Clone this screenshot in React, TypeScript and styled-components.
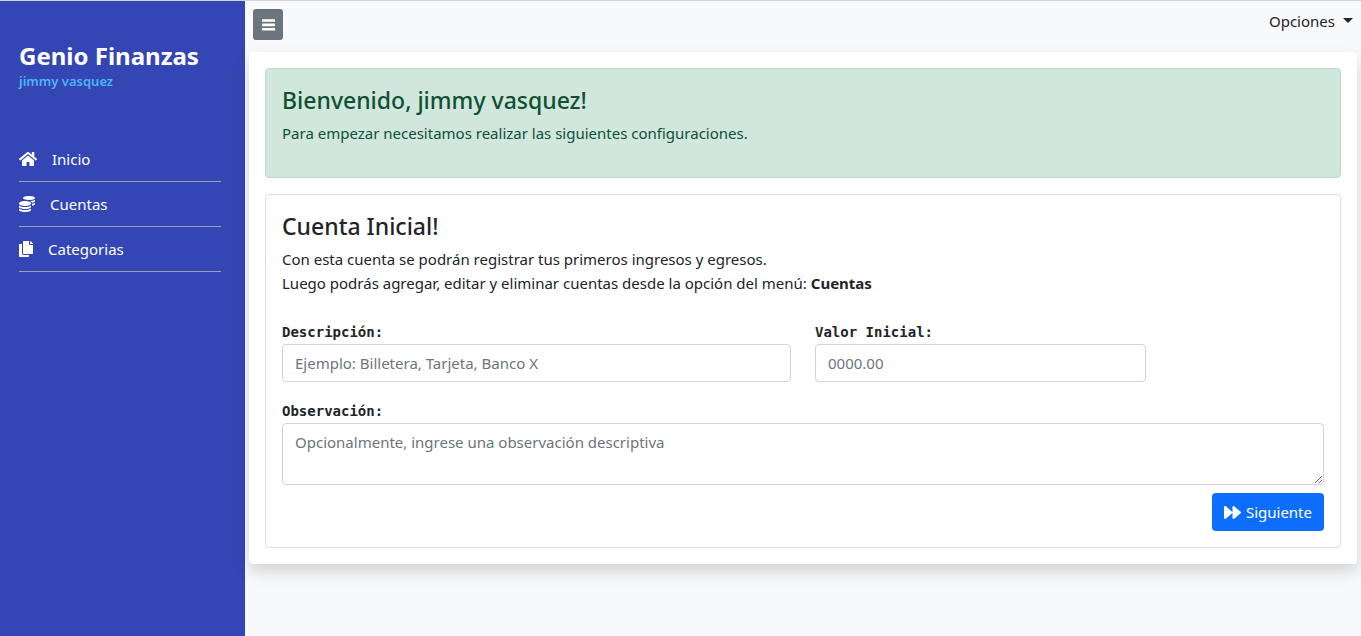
import React from "react";
import styled, { createGlobalStyle } from "styled-components";
import { FaCoins, FaCopy, FaForward, FaHome } from "react-icons/fa";

const GlobalStyle = createGlobalStyle`
  *, *::before, *::after { box-sizing: border-box; }
  body {
    margin: 0;
    background: #f8f9fa;
    color: #212529;
    font-family: "Noto Sans", "Open Sans", sans-serif;
    font-size: 15px;
    line-height: 24px;
  }
`;

const Page = styled.div`
  display: flex;
  min-height: 100vh;
  border-top: 1px solid #cfd2d8;
`;

const Sidebar = styled.aside`
  flex: none;
  width: 245px;
  padding: 40px 24px 24px 19px;
  background: #3446b4;
  color: #fff;
`;

const Brand = styled.h1`
  margin: 0;
  font-size: 24px;
  line-height: 30px;
  font-weight: 700;
`;

const UserName = styled.p`
  margin: 0 0 46px;
  color: #4cb4f5;
  font-size: 13px;
  line-height: 20px;
  font-weight: 600;
`;

const MenuLink = styled.a<{ $icon: number }>`
  display: flex;
  align-items: center;
  gap: 15px;
  height: 45px;
  border-bottom: 1px solid #9a9fb4;
  color: #fff;
  text-decoration: none;
  svg { width: ${(p) => p.$icon}px; height: 16px; }
`;

const Main = styled.div`
  flex: 1;
  min-width: 0;
  padding: 0 4px;
`;

const TopBar = styled.header`
  display: flex;
  align-items: flex-start;
  justify-content: space-between;
  height: 51px;
  padding: 8px 4px;
`;

const ToggleButton = styled.button`
  display: grid;
  place-items: center;
  width: 30px;
  height: 31px;
  padding: 0;
  border: 0;
  border-radius: 3px;
  background: #6c757d;
  color: #fff;
`;

const OptionsButton = styled.button`
  display: flex;
  align-items: center;
  gap: 8px;
  padding: 0;
  border: 0;
  background: none;
  color: #212529;
  font: inherit;
  &::after {
    content: "";
    border-top: 5px solid;
    border-left: 5px solid transparent;
    border-right: 5px solid transparent;
    margin-bottom: 1px;
  }
`;

const Content = styled.main`
  padding: 16px;
  border-radius: 4px;
  background: #fff;
  box-shadow: 0 8px 16px rgba(0, 0, 0, 0.15);
`;

const Panel = styled.section<{ $success?: boolean }>`
  padding: 16px;
  border: 1px solid ${(p) => (p.$success ? "#badbcc" : "#dfdfdf")};
  border-radius: 4px;
  background: ${(p) => (p.$success ? "#d1e7dd" : "#fff")};
  color: ${(p) => (p.$success ? "#0f5132" : "inherit")};
  & + & { margin-top: 16px; }
`;

const Title = styled.h2`
  margin: 0 0 6px;
  font-size: 23px;
  line-height: 30px;
  font-weight: 500;
`;

const Text = styled.p`
  margin: 0 0 16px;
`;

const Form = styled.form`
  display: grid;
  grid-template-columns: repeat(12, minmax(0, 1fr));
  column-gap: 24px;
  row-gap: 17px;
  padding-top: 9px;
`;

const Field = styled.div<{ $span: number }>`
  grid-column: span ${(p) => p.$span};
`;

const Label = styled.label`
  display: block;
  font-family: "DejaVu Sans Mono", monospace;
  font-size: 14px;
  font-weight: 700;
`;

const Input = styled.input`
  display: block;
  width: 100%;
  height: 38px;
  padding: 6px 12px;
  border: 1px solid #ced4da;
  border-radius: 4px;
  background: #fff;
  color: #212529;
  font: inherit;
  &::placeholder { color: #6c757d; opacity: 1; }
`;

const TextArea = styled(Input)`
  height: 62px;
  resize: vertical;
`;

const Actions = styled.div`
  display: flex;
  justify-content: flex-end;
  padding-top: 8px;
`;

const NextButton = styled.button`
  display: flex;
  align-items: center;
  gap: 5px;
  height: 38px;
  padding: 0 12px;
  border: 0;
  border-radius: 4px;
  background: #0d6efd;
  color: #fff;
  font: inherit;
  svg { font-size: 17px; }
`;

const BarsIcon = () => (
  <svg width="13" height="12" viewBox="0 0 13 12" fill="currentColor" aria-hidden="true">
    <rect y="0.2" width="13" height="2.6" rx="0.5" />
    <rect y="4.6" width="13" height="2.6" rx="0.5" />
    <rect y="9" width="13" height="2.6" rx="0.5" />
  </svg>
);

export default function App() {
  return (
    <>
      <GlobalStyle />
      <Page>
        <Sidebar>
          <Brand>Genio Finanzas</Brand>
          <UserName>jimmy vasquez</UserName>
          <nav>
            <MenuLink href="#inicio" $icon={18}><FaHome />Inicio</MenuLink>
            <MenuLink href="#cuentas" $icon={16}><FaCoins />Cuentas</MenuLink>
            <MenuLink href="#categorias" $icon={14}><FaCopy />Categorias</MenuLink>
          </nav>
        </Sidebar>
        <Main>
          <TopBar>
            <ToggleButton type="button" aria-label="Menú"><BarsIcon /></ToggleButton>
            <OptionsButton type="button">Opciones</OptionsButton>
          </TopBar>
          <Content>
            <Panel $success>
              <Title>Bienvenido, jimmy vasquez!</Title>
              <Text>Para empezar necesitamos realizar las siguientes configuraciones.</Text>
            </Panel>
            <Panel>
              <Title>Cuenta Inicial!</Title>
              <Text>
                Con esta cuenta se podrán registrar tus primeros ingresos y egresos.<br />
                Luego podrás agregar, editar y eliminar cuentas desde la opción del menú: <b>Cuentas</b>
              </Text>
              <Form id="cuenta">
                <Field $span={6}>
                  <Label htmlFor="descripcion">Descripción:</Label>
                  <Input id="descripcion" type="text" placeholder="Ejemplo: Billetera, Tarjeta, Banco X" />
                </Field>
                <Field $span={4}>
                  <Label htmlFor="valor">Valor Inicial:</Label>
                  <Input id="valor" type="number" placeholder="0000.00" />
                </Field>
                <Field $span={12}>
                  <Label htmlFor="observacion">Observación:</Label>
                  <TextArea as="textarea" id="observacion" placeholder="Opcionalmente, ingrese una observación descriptiva" />
                </Field>
              </Form>
              <Actions>
                <NextButton type="submit" form="cuenta"><FaForward />Siguiente</NextButton>
              </Actions>
            </Panel>
          </Content>
        </Main>
      </Page>
    </>
  );
}
